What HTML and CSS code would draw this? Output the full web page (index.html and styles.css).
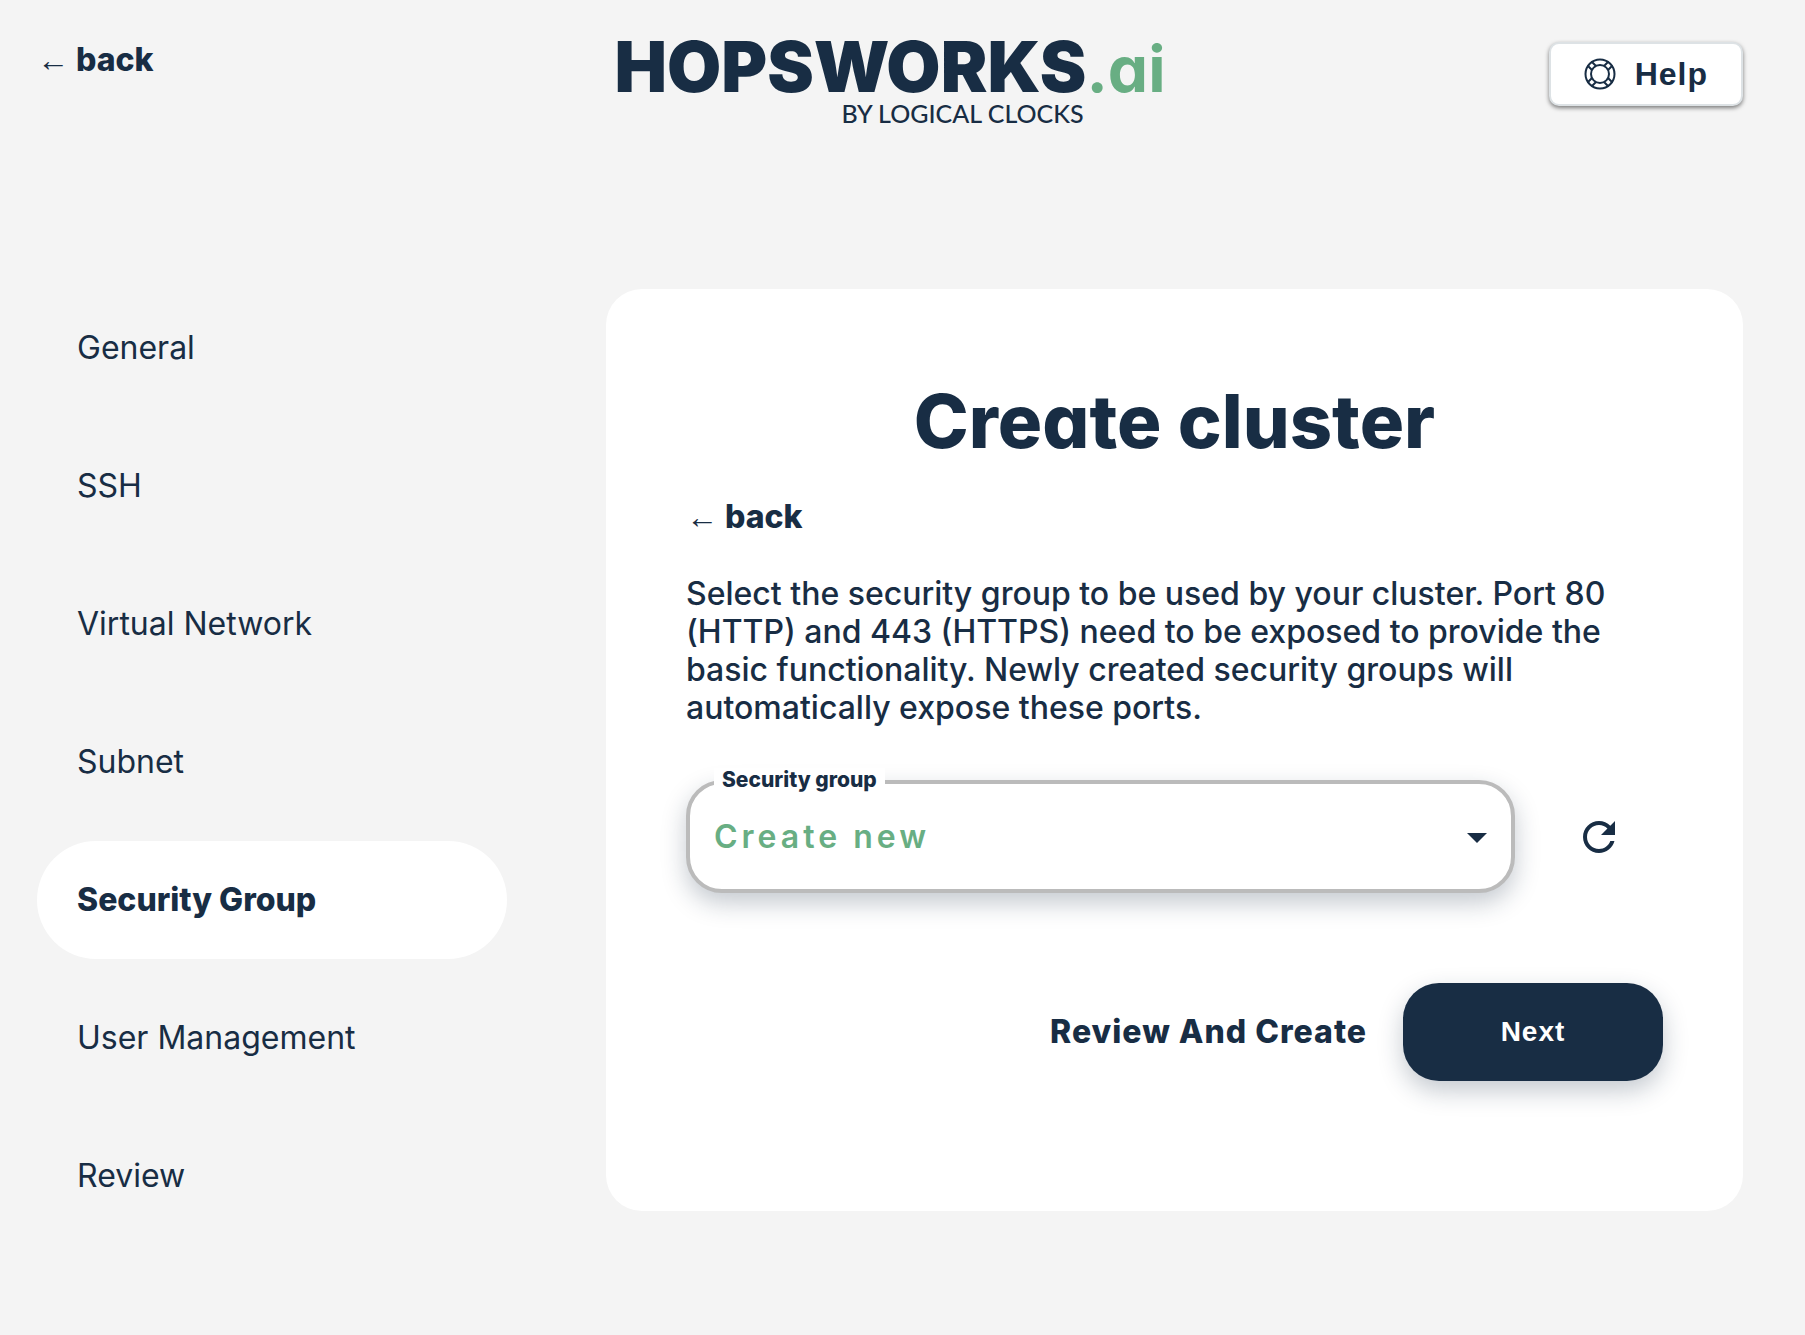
FILE: index.html
```html
<!DOCTYPE html>
<html lang="en">
<head>
  <meta charset="utf-8">
  <meta name="viewport" content="width=device-width, initial-scale=1">
  <title>Hopsworks.ai - Create cluster</title>
  <link rel="stylesheet" href="styles.css">
</head>
<body>
  <header class="header">
    <a class="back" href="#"><span class="back-arrow">←</span><span>back</span></a>
    <a class="logo" href="#">
      <span class="logo-name">HOPSWORKS<span class="logo-tld">.ai</span></span>
      <span class="logo-by">BY LOGICAL CLOCKS</span>
    </a>
    <button class="help" type="button">
      <svg class="help-icon" viewBox="0 0 32 32" fill="none" stroke="currentColor" stroke-width="2" aria-hidden="true">
        <circle cx="16" cy="16" r="14.5"/>
        <circle cx="16" cy="16" r="9"/>
        <path d="M8 12 3.500 7.500M12 8 7.500 3.500M24 12 28.500 7.500M20 8 24.500 3.500M8 20 3.500 24.500M12 24 7.500 28.500M24 20 28.500 24.500M20 24 24.500 28.500"/>
      </svg>
      <span>Help</span>
    </button>
  </header>

  <main class="main">
    <nav class="steps" aria-label="Cluster creation steps">
      <a class="step" href="#">General</a>
      <a class="step" href="#">SSH</a>
      <a class="step" href="#">Virtual Network</a>
      <a class="step" href="#">Subnet</a>
      <a class="step step-current" href="#" aria-current="step">Security Group</a>
      <a class="step" href="#">User Management</a>
      <a class="step" href="#">Review</a>
    </nav>

    <section class="card">
      <h1 class="title">Create cluster</h1>
      <a class="back" href="#"><span class="back-arrow">←</span><span>back</span></a>
      <p class="intro">Select the security group to be used by your cluster. Port 80 (HTTP) and 443 (HTTPS) need to be exposed to provide the basic functionality. Newly created security groups will automatically expose these ports.</p>
      <div class="picker">
        <div class="field">
          <label class="field-label" for="security-group">Security group</label>
          <select class="field-select" id="security-group">
            <option>Create new</option>
          </select>
          <svg class="field-caret" viewBox="0 0 20 10" aria-hidden="true"><path d="M0 0h20L10 10z" fill="currentColor"/></svg>
        </div>
        <button class="refresh" type="button" aria-label="Refresh">
          <svg class="refresh-icon" viewBox="0 0 24 24" aria-hidden="true"><path fill="currentColor" d="M17.650 6.350C16.200 4.900 14.210 4 12 4c-4.420 0-7.990 3.580-7.990 8s3.570 8 7.990 8c3.730 0 6.840-2.550 7.730-6h-2.080c-.82 2.330-3.040 4-5.650 4-3.310 0-6-2.690-6-6s2.690-6 6-6c1.660 0 3.140.69 4.220 1.780L13 11h7V4l-2.350 2.350z"/></svg>
        </button>
      </div>
      <div class="actions">
        <button class="review" type="button">Review And Create</button>
        <button class="next" type="button">Next</button>
      </div>
    </section>
  </main>
</body>
</html>
```
FILE: styles.css
```css
:root {
  --navy: #182d44;
  --green: #68ae83;
  --page: #f4f4f4;
  --shadow: 0 10px 24px rgba(24, 45, 68, 0.25);
}

* {
  box-sizing: border-box;
}

body {
  margin: 0;
  padding: 36px 62px 124px 37px;
  background: var(--page);
  color: var(--navy);
  font-family: Inter, "Liberation Sans", sans-serif;
  font-size: 32px;
  line-height: 38px;
}

a {
  color: inherit;
  text-decoration: none;
}

button {
  border: 0;
  background: none;
  color: inherit;
  cursor: pointer;
}

.header {
  display: grid;
  grid-template-columns: 1fr auto 1fr;
  align-items: start;
  min-height: 253px;
}

.back {
  display: flex;
  align-items: baseline;
  align-self: flex-start;
  justify-self: start;
  gap: 7px;
  padding: 5px 0 3px;
  font-weight: 800;
}

.back-arrow {
  font-family: "Liberation Sans", sans-serif;
  font-size: 32px;
  font-weight: 400;
}

.logo {
  display: flex;
  flex-direction: column;
}

.logo-name {
  font-size: 70px;
  font-weight: 900;
  line-height: 62px;
}

.logo-tld {
  color: var(--green);
  font-size: 64px;
  font-weight: 700;
  font-feature-settings: "cv11";
}

.logo-by {
  align-self: flex-end;
  padding-right: 82px;
  font-family: Lato, sans-serif;
  font-size: 25px;
  font-weight: 500;
  line-height: 26px;
}

.help {
  display: flex;
  align-items: center;
  justify-self: end;
  gap: 19px;
  margin-top: 6px;
  padding: 12px 33px;
  border: 2px solid #dde2e5;
  border-radius: 10px;
  background: #fff;
  box-shadow: 0 2px 4px rgba(0, 0, 0, 0.5);
  font: 700 32px/36px "Liberation Sans", sans-serif;
  letter-spacing: 1px;
}

.help-icon {
  width: 32px;
  height: 32px;
}

.main {
  display: grid;
  grid-template-columns: 470fr 1137fr;
  column-gap: 99px;
  align-items: start;
}

.steps {
  display: flex;
  flex-direction: column;
  gap: 20px;
}

.step {
  padding: 40px;
  border-radius: 59px;
}

.step-current {
  background: #fff;
  font-weight: 800;
}

.card {
  display: flex;
  flex-direction: column;
  padding: 80px;
  padding-bottom: 130px;
  border-radius: 36px;
  background: #fff;
}

.title {
  margin: 0 0 20px;
  font-size: 74px;
  font-weight: 800;
  line-height: 104px;
  text-align: center;
  font-feature-settings: "cv11";
}

.intro {
  margin: 36px 0 53px;
  padding-right: 40px;
  font-weight: 500;
}

.picker {
  display: flex;
  align-items: center;
  gap: 60px;
  padding-right: 40px;
}

.field {
  position: relative;
  flex: 1;
}

.field-label {
  position: absolute;
  top: -12px;
  left: 28px;
  padding: 0 8px;
  background: #fff;
  font-size: 21px;
  font-weight: 800;
  line-height: 24px;
}

.field-select {
  display: block;
  width: 100%;
  height: 113px;
  padding: 0 80px 0 24px;
  border: 4px solid #bbb;
  border-radius: 36px;
  appearance: none;
  background: #fff;
  box-shadow: var(--shadow);
  color: var(--green);
  font: 600 32px/38px Inter, sans-serif;
  letter-spacing: 4px;
}

.field-caret {
  position: absolute;
  top: 53px;
  right: 28px;
  width: 20px;
  height: 10px;
  pointer-events: none;
}

.refresh {
  padding: 0;
}

.refresh-icon {
  display: block;
  width: 48px;
  height: 48px;
}

.actions {
  display: flex;
  align-items: center;
  justify-content: flex-end;
  gap: 36px;
  margin-top: 90px;
}

.review {
  padding: 0;
  font: 800 32px/38px Inter, sans-serif;
  letter-spacing: 1px;
}

.next {
  width: 260px;
  padding: 33px 0;
  border-radius: 36px;
  background: var(--navy);
  box-shadow: var(--shadow);
  color: #fff;
  font: 700 28px/32px "Liberation Sans", sans-serif;
  letter-spacing: 1px;
}
```
